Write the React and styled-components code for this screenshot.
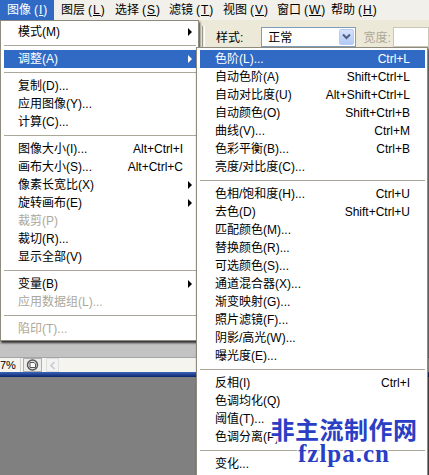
import React from "react";
import styled, { createGlobalStyle } from "styled-components";

const GlobalStyle = createGlobalStyle`
  html, body {
    margin: 0;
    padding: 0;
    background: #808080;
  }
  body {
    font-family: "Liberation Sans", "Noto Sans CJK SC", sans-serif;
    font-size: 12px;
    color: #000;
  }
`;

const topMenus = [
  { label: "图像", key: "I", active: true },
  { label: "图层", key: "L" },
  { label: "选择", key: "S" },
  { label: "滤镜", key: "T" },
  { label: "视图", key: "V" },
  { label: "窗口", key: "W" },
  { label: "帮助", key: "H" },
];

const imageMenu = [
  { text: "模式(M)", sub: true },
  "-",
  { text: "调整(A)", sub: true, active: true },
  "-",
  { text: "复制(D)..." },
  { text: "应用图像(Y)..." },
  { text: "计算(C)..." },
  "-",
  { text: "图像大小(I)...", keys: "Alt+Ctrl+I" },
  { text: "画布大小(S)...", keys: "Alt+Ctrl+C" },
  { text: "像素长宽比(X)", sub: true },
  { text: "旋转画布(E)", sub: true },
  { text: "裁剪(P)", disabled: true },
  { text: "裁切(R)..." },
  { text: "显示全部(V)" },
  "-",
  { text: "变量(B)", sub: true },
  { text: "应用数据组(L)...", disabled: true },
  "-",
  { text: "陷印(T)...", disabled: true },
];

const adjustMenu = [
  { text: "色阶(L)...", keys: "Ctrl+L", active: true },
  { text: "自动色阶(A)", keys: "Shift+Ctrl+L" },
  { text: "自动对比度(U)", keys: "Alt+Shift+Ctrl+L" },
  { text: "自动颜色(O)", keys: "Shift+Ctrl+B" },
  { text: "曲线(V)...", keys: "Ctrl+M" },
  { text: "色彩平衡(B)...", keys: "Ctrl+B" },
  { text: "亮度/对比度(C)..." },
  "-",
  { text: "色相/饱和度(H)...", keys: "Ctrl+U" },
  { text: "去色(D)", keys: "Shift+Ctrl+U" },
  { text: "匹配颜色(M)..." },
  { text: "替换颜色(R)..." },
  { text: "可选颜色(S)..." },
  { text: "通道混合器(X)..." },
  { text: "渐变映射(G)..." },
  { text: "照片滤镜(F)..." },
  { text: "阴影/高光(W)..." },
  { text: "曝光度(E)..." },
  "-",
  { text: "反相(I)", keys: "Ctrl+I" },
  { text: "色调均化(Q)" },
  { text: "阈值(T)..." },
  { text: "色调分离(P)..." },
  "-",
  { text: "变化..." },
];

function Menu({ items, x, y, width, padL, padR, z }) {
  return (
    <MenuPanel $x={x} $y={y} $w={width} $z={z}>
      {items.map((item, i) =>
        item === "-" ? (
          <Sep key={i} />
        ) : (
          <Row
            key={i}
            $padL={padL}
            $padR={padR}
            $active={item.active}
            $disabled={item.disabled}
          >
            <ItemText>{item.text}</ItemText>
            {item.keys && <Keys>{item.keys}</Keys>}
            {item.sub && <SubArrow />}
          </Row>
        )
      )}
    </MenuPanel>
  );
}

export default function App() {
  return (
    <>
      <GlobalStyle />
      <Screen>
        <MenuBar>
          {topMenus.map((m) => (
            <TopItem key={m.label} $active={m.active}>
              {m.label}
              <Mnemonic>
                (<u>{m.key}</u>)
              </Mnemonic>
            </TopItem>
          ))}
        </MenuBar>

        <OptionsBar>
          <Grip />
          <OptLabel>样式:</OptLabel>
          <Combo>
            正常
            <ComboButton>
              <svg width="9" height="7" viewBox="0 0 9 7">
                <path d="M1 1.5 L4.5 5 L8 1.5" fill="none" stroke="#4d6185" strokeWidth="2" />
              </svg>
            </ComboButton>
          </Combo>
          <OptLabel $disabled>宽度:</OptLabel>
          <Field />
        </OptionsBar>

        <Workspace>
          <DocArea />
          <StatusBar>
            <ZoomField>7%</ZoomField>
            <StatusButton $w={19}>
              <svg width="13" height="12" viewBox="0 0 13 12">
                <circle cx="6.5" cy="6" r="5" fill="#e4e4e4" stroke="#555" strokeWidth="1.4" />
                <path d="M4 3.5 H8 L9.5 5 V8.5 H4 Z" fill="#fff" stroke="#444" strokeWidth="0.9" />
              </svg>
            </StatusButton>
            <StatusButton $w={13} $light>
              <svg width="7" height="9" viewBox="0 0 7 9">
                <path d="M5.5 1 L2 4.5 L5.5 8" fill="none" stroke="#c8c8c8" strokeWidth="1.5" />
              </svg>
            </StatusButton>
          </StatusBar>
          <TitleEdge />
          <Canvas />
        </Workspace>

        <Menu items={imageMenu} x={0} y={20} width={199} padL={14} padR={13} z={2} />
        <Menu items={adjustMenu} x={196} y={47} width={232} padL={15} padR={15} z={3} />

        <Watermark>
          <WmTitle>非主流制作网</WmTitle>
          <WmUrl>fzlpa.cn</WmUrl>
        </Watermark>
      </Screen>
    </>
  );
}

const Screen = styled.div`
  position: relative;
  width: 429px;
  height: 475px;
  overflow: hidden;
  display: flex;
  flex-direction: column;
  background: #808080;
`;

const MenuBar = styled.div`
  display: flex;
  height: 20px;
  background: #f1f0ea;
`;

const TopItem = styled.div`
  width: 54px;
  box-sizing: border-box;
  padding-left: 7px;
  line-height: 20px;
  white-space: nowrap;
  background: ${(p) => (p.$active ? "#316ac5" : "transparent")};
  color: ${(p) => (p.$active ? "#fff" : "#000")};
`;

const Mnemonic = styled.span`
  margin-left: 3px;
  letter-spacing: 1px;
`;

const OptionsBar = styled.div`
  display: flex;
  align-items: center;
  height: 27px;
  box-sizing: border-box;
  padding: 6px 0 0 202px;
  background: #ece9d8;
`;

const Grip = styled.div`
  width: 1px;
  height: 22px;
  border-left: 1px solid #9d9a8a;
  border-right: 1px solid #fff;
`;

const OptLabel = styled.span`
  margin-left: ${(p) => (p.$disabled ? 8 : 11)}px;
  color: ${(p) => (p.$disabled ? "#aca899" : "#000")};
  white-space: nowrap;
`;

const Combo = styled.div`
  display: flex;
  align-items: center;
  width: 104px;
  height: 20px;
  box-sizing: border-box;
  margin-left: 18px;
  padding-left: 6px;
  border: 1px solid #7f9db9;
  background: #fff;
`;

const ComboButton = styled.div`
  display: flex;
  align-items: center;
  justify-content: center;
  width: 15px;
  height: 16px;
  margin: 0 1px 0 auto;
  border-radius: 2px;
  border: 1px solid #b9cbf3;
  box-sizing: border-box;
  background: linear-gradient(#d6e3fd, #b3c9f6);
`;

const Field = styled.div`
  width: 40px;
  height: 20px;
  margin-left: 2px;
  box-sizing: border-box;
  border: 1px solid #c9c7ba;
  background: #fff;
`;

const Workspace = styled.div`
  flex: 1;
  display: flex;
  flex-direction: column;
`;

const DocArea = styled.div`
  height: 310px;
  background: #c3c3c3;
`;

const StatusBar = styled.div`
  display: flex;
  align-items: center;
  height: 15px;
  box-sizing: border-box;
  border-top: 1px solid #a5a5a5;
  background: #f5f4ef;
`;

const ZoomField = styled.div`
  font-size: 11px;
  line-height: 14px;
  padding-right: 4px;
  border-right: 1px solid #d0d0d0;
  white-space: nowrap;
`;

const StatusButton = styled.div`
  display: flex;
  align-items: center;
  justify-content: center;
  width: ${(p) => p.$w}px;
  height: 14px;
  margin-left: ${(p) => (p.$light ? 4 : 2)}px;
  box-sizing: border-box;
  border: 1px solid ${(p) => (p.$light ? "#dedede" : "#b0b0b0")};
  background: ${(p) => (p.$light ? "#f3f3f3" : "#ececec")};
`;

const TitleEdge = styled.div`
  height: 5px;
  background: linear-gradient(#3b64b9, #0a246a);
`;

const Canvas = styled.div`
  flex: 1;
  background: #808080;
`;

const MenuPanel = styled.div`
  position: absolute;
  left: ${(p) => p.$x}px;
  top: ${(p) => p.$y}px;
  width: ${(p) => p.$w}px;
  z-index: ${(p) => p.$z};
  box-sizing: border-box;
  padding: 2px 2px 2px 3px;
  background: #fff;
  border: 1px solid #8e8b7e;
  box-shadow: 1px 2px 2px rgba(0, 0, 0, 0.75);
`;

const Row = styled.div`
  position: relative;
  display: flex;
  align-items: center;
  height: 18px;
  line-height: 18px;
  padding: 0 ${(p) => p.$padR}px 0 ${(p) => p.$padL}px;
  white-space: nowrap;
  background: ${(p) => (p.$active ? "#316ac5" : "transparent")};
  color: ${(p) => (p.$active ? "#fff" : p.$disabled ? "#aca899" : "#000")};
`;

const ItemText = styled.span`
  flex: 1;
`;

const Keys = styled.span`
  margin-left: 12px;
`;

const SubArrow = styled.span`
  position: absolute;
  right: 4px;
  top: 5px;
  width: 0;
  height: 0;
  border-left: 4px solid currentColor;
  border-top: 4px solid transparent;
  border-bottom: 4px solid transparent;
`;

const Sep = styled.div`
  height: 1px;
  margin: 4px 0;
  background: #aca899;
`;

const Watermark = styled.div`
  position: absolute;
  left: 268px;
  top: 416px;
  width: 152px;
  z-index: 5;
  display: flex;
  flex-direction: column;
  align-items: center;
  color: #2a3fc4;
  text-shadow: 1px 0 0 #fff, -1px 0 0 #fff, 0 1px 0 #fff, 0 -1px 0 #fff,
    1px 1px 0 #fff, -1px -1px 0 #fff, 1px -1px 0 #fff, -1px 1px 0 #fff;
`;

const WmTitle = styled.div`
  font-family: "Noto Sans CJK SC", sans-serif;
  font-weight: 700;
  font-size: 24px;
  line-height: 25px;
  letter-spacing: 0.5px;
`;

const WmUrl = styled.div`
  font-family: "Liberation Serif", serif;
  font-weight: 700;
  font-size: 25px;
  line-height: 25px;
  letter-spacing: 1px;
`;
